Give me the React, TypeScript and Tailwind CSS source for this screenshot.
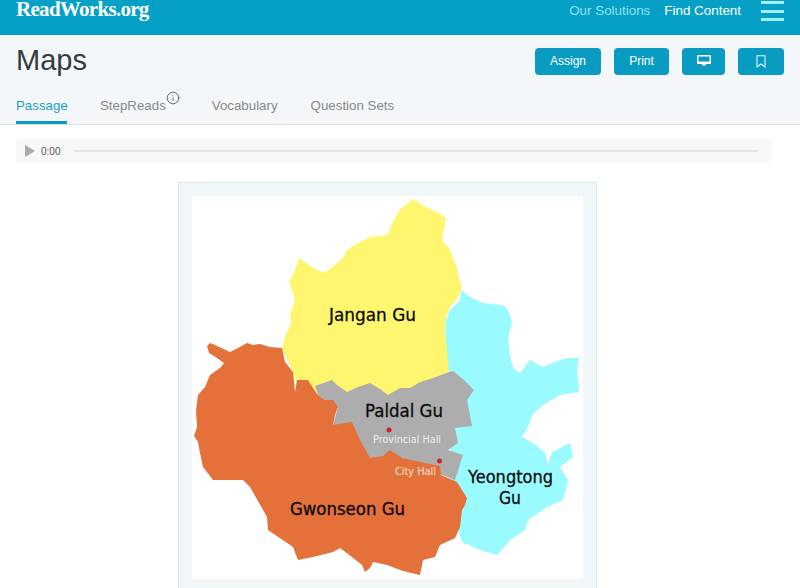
import React from 'react';
import { Info } from 'lucide-react';

// outlines traced off the map picture, in page coordinates
const cyan =
  '461,290 472,298 483,303 505,306 510,315 512,323 508,338 510,355 513,368 520,373 530,360 537,364 543,367 555,362 567,358 579,358 577,370 579,392 560,395 543,405 532,415 528,427 522,437 533,443 545,453 548,465 552,452 570,443 573,457 560,467 568,480 563,500 547,507 528,520 525,530 510,540 497,555 480,550 462,542 455,520 450,490 450,450 445,400 447,370 445,323 450,310 460,300';
const yellow =
  '413,199 418,202 427,208 437,212 446,218 444,230 442,240 449,248 453,258 457,268 459,277 462,287 458,298 450,307 446,317 445,333 447,350 449,372 433,385 410,395 400,395 388,400 370,390 347,398 332,388 315,392 297,385 293,372 282,348 285,337 291,323 290,315 295,300 292,290 289,282 295,270 299,258 305,262 313,268 324,273 335,265 343,258 347,250 358,243 370,237 388,235 392,223 398,212 403,207';
const grey =
  '315,386 332,380 337,385 347,392 358,387 370,383 380,389 388,395 400,388 410,388 420,382 433,378 449,372 453,371 464,380 474,390 467,400 472,426 455,428 458,443 448,450 463,455 455,480 442,475 402,458 370,458 333,425 338,407 325,400 318,395';
const orange =
  '210,343 215,345 230,352 238,348 247,343 253,345 260,344 270,347 282,348 285,362 293,372 295,392 297,380 308,380 313,388 318,395 325,400 333,400 338,407 335,415 333,425 352,422 360,440 370,458 383,456 390,450 402,458 425,463 440,466 441,475 457,482 467,498 465,505 462,510 460,527 455,538 440,545 435,557 423,560 420,575 403,571 387,565 373,562 370,568 365,572 362,565 352,557 340,548 333,552 313,557 298,560 293,547 268,530 267,517 250,487 243,480 213,480 203,467 200,453 198,442 194,436 197,427 196,410 198,395 205,387 210,375 220,368 224,363 217,358 209,353 207,346';

function MapImage() {
  return (
    <svg viewBox="192 196 391 383" className="block h-[383px] w-[391px] bg-white font-['DejaVu_Sans',sans-serif]">
      <polygon points={cyan} fill="#99fbff" />
      <polygon points={yellow} fill="#fff66f" />
      <polygon points={grey} fill="#adadad" />
      <polygon points={orange} fill="#e4703a" />
      <circle cx="389" cy="430" r="2.5" fill="#c8242c" />
      <circle cx="439.5" cy="461" r="2.5" fill="#c8242c" />
      <g fontSize="18" fill="#0a0a0a" stroke="#0a0a0a" strokeWidth="0.3">
        <text x="329" y="321" textLength="87" lengthAdjust="spacingAndGlyphs">Jangan  Gu</text>
        <text x="365" y="417" textLength="78" lengthAdjust="spacingAndGlyphs">Paldal  Gu</text>
        <text x="468" y="483" textLength="85" lengthAdjust="spacingAndGlyphs">Yeongtong</text>
        <text x="499" y="504" textLength="22" lengthAdjust="spacingAndGlyphs">Gu</text>
        <text x="290" y="515" textLength="115" lengthAdjust="spacingAndGlyphs">Gwonseon  Gu</text>
      </g>
      <text x="373" y="443" fontSize="11" textLength="68" lengthAdjust="spacingAndGlyphs" fill="#eeeeee">Provincial  Hall</text>
      <text x="395" y="475" fontSize="11" textLength="41" lengthAdjust="spacingAndGlyphs" fill="#f8e6dc">City  Hall</text>
    </svg>
  );
}

export default function App() {
  const tabs = ['Vocabulary', 'Question Sets'];

  return (
    <div className="h-[588px] w-[800px] overflow-hidden bg-white font-['Liberation_Sans',sans-serif]">
      {/* top nav */}
      <div className="flex h-[35px] items-start justify-between overflow-hidden border-b border-[#0a92b6] bg-[#069fc6] px-4">
        <div className="font-['Liberation_Serif',serif] text-[21px] font-bold leading-[18px] tracking-[-0.7px] text-white">
          ReadWorks<span className="text-[#d8f3f8]">.</span>org
        </div>
        <div className="flex items-start">
          <span className="mt-[3px] text-[13.4px] leading-4 text-[#8fe3ee]">Our Solutions</span>
          <span className="ml-[14px] mt-[3px] text-[13.4px] leading-4 text-white">Find Content</span>
          <div className="ml-5 mt-[1px] flex w-[23px] flex-col gap-[5.5px]">
            <div className="h-[3px] bg-[#a6eef6]" />
            <div className="h-[3px] bg-[#a6eef6]" />
            <div className="h-[3px] bg-[#a6eef6]" />
          </div>
        </div>
      </div>

      {/* title and tabs */}
      <div className="h-[90px] border-b border-[#dcdfe0] bg-[#f4f7f9] px-4">
        <div className="flex h-[55px] items-start justify-between">
          <h1 className="mt-[7px] text-[29px] leading-9 text-[#343c42]">Maps</h1>
          <div className="mt-[13px] flex gap-[13px] text-[12px] text-white">
            <button className="flex h-[27px] w-[66px] items-center justify-center rounded bg-[#0a9bc2] pb-[2px]">Assign</button>
            <button className="flex h-[27px] w-[55px] items-center justify-center rounded bg-[#0a9bc2] pb-[2px]">Print</button>
            <button className="flex h-[27px] w-[43px] items-center justify-center rounded bg-[#0a9bc2] pb-[3px]">
              <svg width="14" height="11" viewBox="0 0 14 11">
                <rect x="0.75" y="0.75" width="12.5" height="7.5" rx="0.5" fill="none" stroke="#ffffff" strokeWidth="1.5" />
                <rect x="1" y="6.5" width="12" height="2" fill="#ffffff" />
                <rect x="5" y="8.5" width="4" height="2" fill="#ffffff" />
              </svg>
            </button>
            <button className="flex h-[27px] w-[46px] items-center justify-center rounded bg-[#0a9bc2]">
              <svg width="10" height="13" viewBox="0 0 10 13">
                <path d="M1 0.75H9V12L5 9L1 12Z" fill="none" stroke="#d9f3f8" strokeWidth="1.1" />
              </svg>
            </button>
          </div>
        </div>
        <div className="flex h-[34px] items-start text-[13.3px] text-[#85898c]">
          <div className="h-[34px] w-[51px] border-b-[3px] border-[#0a9bc2] pt-2 leading-4 text-[#1a9fc2]">Passage</div>
          <div className="ml-[33px] flex items-start pt-2 leading-4">
            StepReads
            <Info size={14} strokeWidth={1.2} className="mt-[-7px] text-[#333333]" />
          </div>
          <div className="ml-[32px] pt-2 leading-4">{tabs[0]}</div>
          <div className="ml-[33px] pt-2 leading-4">{tabs[1]}</div>
        </div>
      </div>

      {/* audio player */}
      <div className="ml-4 mt-[14px] flex h-[24px] w-[756px] items-center rounded-sm bg-[#f8f8f8] pl-[9px] pr-[14px]">
        <svg width="10" height="12" viewBox="0 0 10 12" className="shrink-0">
          <polygon points="0,0 10,6 0,12" fill="#aaaaaa" />
        </svg>
        <span className="ml-[6px] text-[10px] text-[#555555]">0:00</span>
        <div className="ml-[14px] h-[2px] flex-1 bg-[#e6e6e6]" />
      </div>

      {/* map */}
      <div className="ml-[178px] mt-[19px] w-[419px] border border-[#dfe5e8] bg-[#f1f6f8] p-[13px] pb-[40px]">
        <MapImage />
      </div>
    </div>
  );
}
